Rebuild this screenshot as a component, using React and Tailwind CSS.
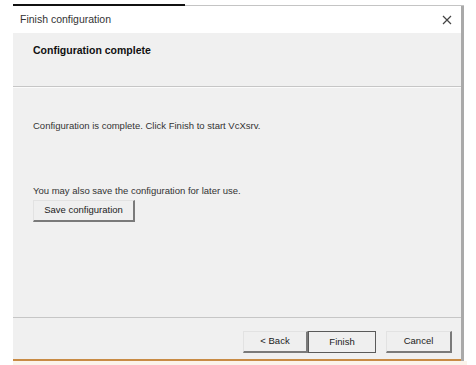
function Btn({ label, w, isDefault }) {
  return (
    <div
      className={
        "h-[22px] flex items-center justify-center bg-[#efefef] text-[9.5px] text-[#222] " +
        (isDefault
          ? "border border-[#5a5a5a]"
          : "border-r-2 border-b-2 border-[#7a7a7a] border-t border-l border-t-[#e2e2e2] border-l-[#e2e2e2]")
      }
      style={{ width: w }}
    >
      {label}
    </div>
  )
}

export default function App() {
  return (
    <div
      className="w-[476px] h-[365px] bg-white overflow-hidden"
      style={{ fontFamily: '"Liberation Sans", Arial, sans-serif' }}
    >
      <div className="pt-[4px] pl-[13px] flex items-start h-[6px]">
        <div className="w-[172px] h-[2px] bg-[#111]" />
        <div className="w-[279px] h-[1px] bg-[#c4c4c4] mt-[1px]" />
      </div>
      <div className="ml-[13px] w-[451px] border-r-[3px] border-[#a9a9a9] flex flex-col">
        <div className="h-[27px] bg-white flex items-center justify-between pl-[7px] pr-[9px]">
          <span className="text-[10.5px] text-[#333]">Finish configuration</span>
          <svg width="10" height="10" viewBox="0 0 10 10">
            <path d="M1 1L9 9M9 1L1 9" stroke="#444" strokeWidth="1.2" />
          </svg>
        </div>
        <div className="h-[53px] bg-[#f0f0f0] pl-[20px] pt-[4px]">
          <span className="text-[10.5px] font-bold text-[#111]">Configuration complete</span>
        </div>
        <div className="h-[1px] bg-[#c6c6c6]" />
        <div className="h-[1px] bg-[#fbfbfb]" />
        <div className="h-[229px] bg-[#f0f0f0] pl-[20px] flex flex-col">
          <div className="mt-[31px] text-[9.5px] text-[#333]">
            Configuration is complete. Click Finish to start VcXsrv.
          </div>
          <div className="mt-[51px] text-[9.5px] text-[#333]">
            You may also save the configuration for later use.
          </div>
          <div className="mt-[1px]">
            <Btn label="Save configuration" w={102} />
          </div>
        </div>
        <div className="h-[1px] bg-[#c6c6c6]" />
        <div className="h-[41px] bg-[#f0f0f0] flex items-start justify-end pt-[13px] pr-[9px]">
          <Btn label="< Back" w={65} />
          <Btn label="Finish" w={68} isDefault />
          <div className="w-[10px]" />
          <Btn label="Cancel" w={66} />
        </div>
        <div className="h-[2px] bg-[#c88b45]" />
      </div>
      <div className="h-[4px] bg-[#fbf3ea] ml-[13px] w-[454px]" />
    </div>
  )
}
